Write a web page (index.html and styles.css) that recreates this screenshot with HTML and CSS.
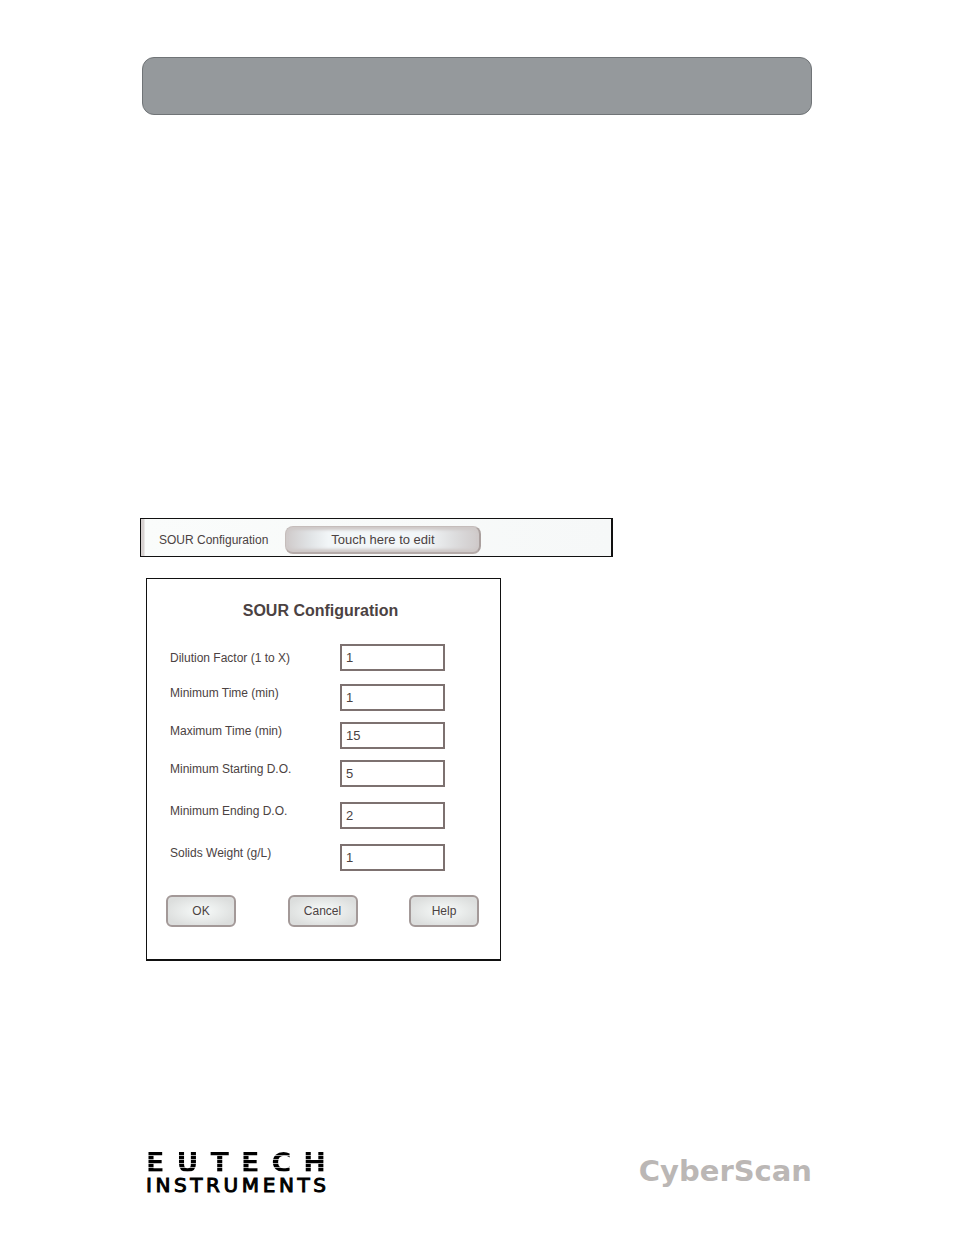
FILE: index.html
```html
<!DOCTYPE html>
<html lang="en">
<head>
<meta charset="utf-8">
<meta name="viewport" content="width=device-width, initial-scale=1">
<title>SOUR Configuration</title>
<link rel="stylesheet" href="styles.css">
</head>
<body>
<div class="page">
  <header class="banner"></header>
  <main class="content">
    <section class="strip">
      <span class="strip-label" id="strip-label">SOUR Configuration</span>
      <button class="edit-button" type="button" aria-describedby="strip-label">Touch here to edit</button>
    </section>
    <form class="panel">
      <h1 class="panel-title">SOUR Configuration</h1>
      <div class="fields">
        <label class="field-label field-label-middle" for="dilution">Dilution Factor (1 to X)</label>
        <input class="field-input" id="dilution" type="text" value="1">
        <label class="field-label" for="min-time">Minimum Time (min)</label>
        <input class="field-input" id="min-time" type="text" value="1">
        <label class="field-label" for="max-time">Maximum Time (min)</label>
        <input class="field-input" id="max-time" type="text" value="15">
        <label class="field-label" for="start-do">Minimum Starting D.O.</label>
        <input class="field-input" id="start-do" type="text" value="5">
        <label class="field-label" for="end-do">Minimum Ending D.O.</label>
        <input class="field-input" id="end-do" type="text" value="2">
        <label class="field-label" for="solids">Solids Weight (g/L)</label>
        <input class="field-input" id="solids" type="text" value="1">
      </div>
      <div class="actions">
        <button class="action" type="button">OK</button>
        <button class="action" type="button">Cancel</button>
        <button class="action" type="button">Help</button>
      </div>
    </form>
  </main>
  <footer class="footer">
    <div class="eutech">
      <div class="eutech-name"><span>E</span><span>U</span><span>T</span><span>E</span><span>C</span><span>H</span></div>
      <div class="eutech-sub"><span>I</span><span>N</span><span>S</span><span>T</span><span>R</span><span>U</span><span>M</span><span>E</span><span>N</span><span>T</span><span>S</span></div>
    </div>
    <div class="cyberscan">CyberScan</div>
  </footer>
</div>
</body>
</html>
```
FILE: styles.css
```css
* { box-sizing: border-box; }

body {
  margin: 0;
  background: #fff;
  color: #4b4242;
  font-family: "Liberation Sans", Arial, sans-serif;
  font-size: 12px;
}

.page {
  display: flex;
  flex-direction: column;
  max-width: 674px;
  min-height: 100vh;
  margin: 0 auto;
  padding: 57px 0 39px;
}

.banner {
  height: 58px;
  margin: 0 2px;
  border: 1px solid #707477;
  border-radius: 12px;
  background: #95999c;
}

.content { margin-top: 403px; }

.strip {
  display: flex;
  align-items: center;
  gap: 17px;
  max-width: 473px;
  height: 39px;
  padding: 4px 16px 0 14px;
  border: 1px solid #111;
  border-right-width: 2px;
  background: linear-gradient(90deg, #d8d3d2 3px, #fafcfb 4px, #f6f8f8);
}

.strip-label {
  padding-left: 4px;
  line-height: 20px;
  white-space: nowrap;
}

.edit-button {
  width: 196px;
  height: 28px;
  padding: 0;
  border: 1px solid #c5bdbb;
  border-right: 2px solid #aaa09e;
  border-bottom: 2px solid #b5aba9;
  border-radius: 8px;
  background: linear-gradient(90deg, #cfcaca, #e0e3e5 12%, #f2f6f8 22%, #f2f6f8 72%, #dcdcdd 88%, #cfcaca);
  box-shadow: inset 0 3px 3px #cfc9c8, inset 0 -3px 3px #cfc9c8;
  color: #4b4242;
  font: 13px "Liberation Sans", Arial, sans-serif;
}

.panel {
  max-width: 355px;
  margin: 21px 0 0 6px;
  padding: 20px 21px 32px 19px;
  border: 1px solid #111;
  border-bottom-width: 2px;
}

.panel-title {
  margin: 0 0 21px;
  padding-right: 4px;
  font-size: 16px;
  line-height: 24px;
  text-align: center;
}

.fields {
  display: grid;
  grid-template-columns: 1fr 105px;
  grid-template-rows: 40px 38px 38px 42px 42px 27px;
  padding: 0 34px 0 4px;
}

.field-label { line-height: 19px; }
.field-label-middle { line-height: 28px; }

.field-input {
  width: 100%;
  height: 27px;
  padding: 0 4px;
  border: 2px solid #7d7170;
  background: #fff;
  color: #4b4242;
  font: 13px "Liberation Sans", Arial, sans-serif;
}

.actions {
  display: flex;
  justify-content: space-between;
  margin-top: 24px;
}

.action {
  width: 70px;
  height: 32px;
  padding: 0;
  border: 2px solid #a39998;
  border-radius: 6px;
  background: radial-gradient(ellipse at center, #f1f4f3 20%, #dcdedd 80%);
  color: #4b4242;
  font: 12px "Liberation Sans", Arial, sans-serif;
}

.footer {
  display: flex;
  justify-content: space-between;
  align-items: flex-start;
  margin-top: auto;
  padding: 0 2px 0 6px;
  font-family: "DejaVu Sans", sans-serif;
}

.eutech { width: 180px; color: #000; }

.eutech-name,
.eutech-sub {
  display: flex;
  justify-content: space-between;
}

.eutech-name {
  background: repeating-linear-gradient(#000 0 3px, #aaa 3px 4px);
  background-clip: text;
  -webkit-background-clip: text;
  color: transparent;
  font-size: 27px;
  font-weight: bold;
  line-height: 22px;
}

.eutech-sub {
  font-size: 20px;
  line-height: 22px;
  -webkit-text-stroke: 1px #000;
}

.cyberscan {
  color: #bbb7b5;
  font-size: 29px;
  font-weight: bold;
  line-height: 38px;
}
```
